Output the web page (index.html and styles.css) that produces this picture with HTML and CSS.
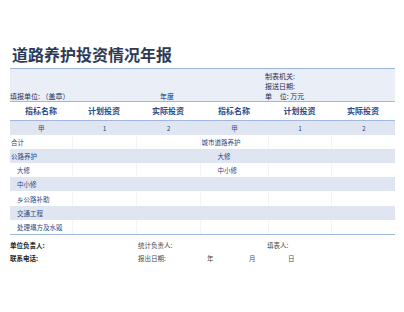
FILE: index.html
```html
<!DOCTYPE html>
<html lang="zh">
<head>
<meta charset="utf-8">
<link rel="stylesheet" href="styles.css">
</head>
<body>
<div class="page">
  <div class="title">道路养护投资情况年报</div>
  <div class="band">
    <div class="org">制表机关:</div>
    <div class="date">报送日期:</div>
    <div class="unit">单&nbsp;&nbsp;&nbsp;&nbsp;&nbsp;位: 万元</div>
    <div class="filler">填报单位: （盖章）</div>
    <div class="year">年度</div>
  </div>
  <table class="report">
    <colgroup>
      <col class="c1"><col class="c2"><col class="c3"><col class="c4"><col class="c5"><col class="c6">
    </colgroup>
    <thead>
      <tr><th>指标名称</th><th>计划投资</th><th>实际投资</th><th>指标名称</th><th>计划投资</th><th>实际投资</th></tr>
    </thead>
    <tbody>
      <tr class="alt idx"><td>甲</td><td>1</td><td>2</td><td>甲</td><td>1</td><td>2</td></tr>
      <tr><td class="lbl">合计</td><td></td><td></td><td class="lbl">城市道路养护</td><td></td><td></td></tr>
      <tr class="alt"><td class="lbl">公路养护</td><td></td><td></td><td class="lbl ind">大修</td><td></td><td></td></tr>
      <tr><td class="lbl ind">大修</td><td></td><td></td><td class="lbl ind">中小修</td><td></td><td></td></tr>
      <tr class="alt"><td class="lbl ind">中小修</td><td></td><td></td><td></td><td></td><td></td></tr>
      <tr><td class="lbl ind">乡公路补助</td><td></td><td></td><td></td><td></td><td></td></tr>
      <tr class="alt"><td class="lbl ind">交通工程</td><td></td><td></td><td></td><td></td><td></td></tr>
      <tr><td class="lbl ind">处理塌方及水毁</td><td></td><td></td><td></td><td></td><td></td></tr>
    </tbody>
  </table>
  <div class="footer">
    <div class="fl">单位负责人:</div>
    <div class="fm">统计负责人:</div>
    <div class="fr">填表人:</div>
    <div class="fl">联系电话:</div>
    <div class="fm">报出日期:</div>
    <div class="fr dates"><span class="y">年</span><span class="m">月</span><span class="d">日</span></div>
  </div>
</div>
</body>
</html>
```

FILE: styles.css
```css
html, body {
  margin: 0;
  padding: 0;
  background: #ffffff;
}
body {
  font-family: "Noto Sans CJK SC", "Noto Sans", sans-serif;
  color: #2b3f6b;
}
.page {
  width: 385px;
  padding-left: 10px;
}
.title {
  height: 69px;
  box-sizing: border-box;
  padding: 44px 0 0 2px;
  font-size: 16px;
  line-height: 20px;
  font-weight: 700;
  color: #2e3a55;
  border-bottom: 1px solid #9fb7dd;
}
.band {
  background: #e9eef7;
  border-bottom: 1px solid #9fb7dd;
  display: grid;
  grid-template-columns: 150px 105px 1fr;
  grid-template-rows: repeat(3, 10px);
  font-size: 7px;
  line-height: 10px;
  color: #1f2f52;
  padding-top: 1.5px;
}
.org { grid-column: 3; grid-row: 1; }
.date { grid-column: 3; grid-row: 2; }
.unit { grid-column: 3; grid-row: 3; }
.filler { grid-column: 1; grid-row: 3; }
.year { grid-column: 2; grid-row: 3; }

.report {
  width: 385px;
  border-collapse: collapse;
  table-layout: fixed;
}
.c1 { width: 62px; }
.c2 { width: 64px; }
.c3 { width: 64px; }
.c4 { width: 68px; }
.c5 { width: 63px; }
.c6 { width: 64px; }
.report th {
  height: 18px;
  padding: 0;
  font-size: 8px;
  font-weight: 700;
  color: #2a4a8c;
  text-align: center;
  border-bottom: 1px solid #9fb7dd;
}
.report td {
  height: 14.2px;
  padding: 0 0 0 1px;
  font-size: 6.5px;
  line-height: 10px;
  color: #2b4682;
  border-left: 1px solid #f1f4f9;
}
.report td:first-child {
  border-left: none;
}
.report tbody tr:last-child td {
  border-bottom: 1px solid #9fb7dd;
}
.report tr.alt td {
  background: #dfe6f2;
  border-left-color: #dfe6f2;
}
.report tr.idx td {
  text-align: center;
}
.report td.ind {
  padding-left: 7px;
}
.report td:nth-child(4).ind {
  padding-left: 17px;
}
.footer {
  display: grid;
  grid-template-columns: 128px 129px 1fr;
  grid-auto-rows: 13px;
  margin-top: 4px;
  font-size: 6.5px;
  line-height: 13px;
}
.fl {
  color: #1a1a1a;
  font-weight: 700;
}
.fm, .fr {
  color: #4a4a4a;
  font-family: "Noto Sans CJK SC", serif;
}
.dates {
  margin-left: -60px;
  display: flex;
}
.dates .y { width: 42px; }
.dates .m { width: 39px; }
```
